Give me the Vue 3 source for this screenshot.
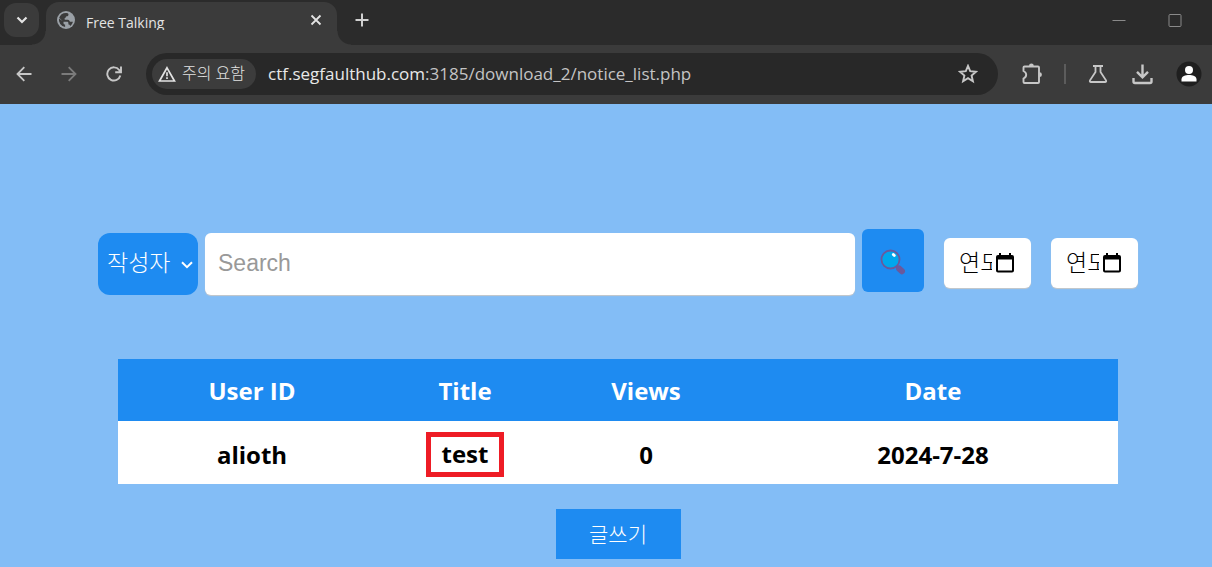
<script setup>
import { ref } from 'vue'

const field = ref('author')
const keyword = ref('')
const dates = ref([
  { id: 'start', label: '시작일', value: '연도' },
  { id: 'end', label: '종료일', value: '연도' }
])
const columns = ['User ID', 'Title', 'Views', 'Date']
const posts = [{ user: 'alioth', title: 'test', views: 0, date: '2024-7-28' }]
</script>

<template>
  <div class="window">
    <header class="browser">
      <div class="tabstrip">
        <button class="tab-search" aria-label="Search tabs">
          <svg width="12" height="8" viewBox="0 0 12 8"><path d="M1.5 1.5 6 6l4.500-4.500" fill="none" stroke="#e3e3e3" stroke-width="2.200" /></svg>
        </button>
        <div class="tab">
          <svg class="globe" width="18" height="18" viewBox="0 0 18 18">
            <circle cx="9" cy="9" r="9" fill="#9aa0a6" />
            <path d="M2 7.500l4.500 3.200v1.200c0 1 .8 1.600 1.600 1.600V16A7.200 7.200 0 0 1 2 7.500zM9.600 2c2 .3 2 1.300 1.800 2.200-.3 1-1.500 1-2.200 1.300-.8.300-.4 1.600-1.300 1.800-.8.200-.5 1.500.3 1.500h2.600c1.500 0 1.500 1.600 2.400 1.900h2.700c-.3 1.700-1.600 3.300-2.800 4.200-.3-.9-.8-1.300-1.700-1.300v-1.600c0-.8-.6-1.300-1.300-1.300H6.300L2.200 6.800C3 3.800 6 1.700 9.600 2z" fill="#3b3b3b" />
          </svg>
          <span class="tab-title">Free Talking</span>
          <button class="icon-btn" aria-label="Close tab">
            <svg width="12" height="12" viewBox="0 0 12 12"><path d="M1.500 1.500l9 9m0-9l-9 9" stroke="#e3e3e3" stroke-width="1.800" /></svg>
          </button>
        </div>
        <button class="icon-btn new-tab" aria-label="New tab">
          <svg width="14" height="14" viewBox="0 0 14 14"><path d="M7 .5v13M.5 7h13" stroke="#d0d0d0" stroke-width="2" /></svg>
        </button>
        <div class="win-controls">
          <button class="icon-btn" aria-label="Minimize">
            <svg width="14" height="14" viewBox="0 0 14 14"><path d="M.5 7.500h13" stroke="#8a8a8a" /></svg>
          </button>
          <button class="icon-btn" aria-label="Maximize">
            <svg width="14" height="14" viewBox="0 0 14 14"><rect x="1" y="1.500" width="12" height="12" rx="1" fill="none" stroke="#8a8a8a" /></svg>
          </button>
        </div>
      </div>

      <div class="toolbar">
        <nav class="nav">
          <button class="icon-btn" aria-label="Back">
            <svg width="16" height="16" viewBox="0 0 16 16"><path d="M15.500 8H1.700M8.300 1.200 1.500 8l6.800 6.800" fill="none" stroke="#c7c7c7" stroke-width="1.800" /></svg>
          </button>
          <button class="icon-btn" aria-label="Forward">
            <svg width="16" height="16" viewBox="0 0 16 16"><path d="M.5 8h13.800M7.700 1.200 14.500 8l-6.800 6.800" fill="none" stroke="#7b7b7b" stroke-width="1.800" /></svg>
          </button>
          <button class="icon-btn" aria-label="Reload">
            <svg width="16" height="16" viewBox="0 0 16 16"><path d="M14.300 9.500A6.600 6.600 0 1 1 13.200 4l1 1.600M15 .5v5.800H9.200" fill="none" stroke="#c7c7c7" stroke-width="1.900" /></svg>
          </button>
        </nav>
        <div class="omnibox">
          <button class="chip">
            <svg width="18" height="16" viewBox="0 0 18 16"><path d="M9 1.800 16.500 15h-15z" fill="none" stroke="#e3e3e3" stroke-width="1.700" /><path d="M9 6.200v4M9 11.300v1.800" stroke="#e3e3e3" stroke-width="1.700" /></svg>
            <span>주의 요함</span>
          </button>
          <span class="url">ctf.segfaulthub.com<span class="path">:3185/download_2/notice_list.php</span></span>
          <button class="icon-btn" aria-label="Bookmark">
            <svg width="20" height="20" viewBox="0 0 20 20"><path d="M10 1.900l2.200 5.300 5.800.5-4.400 3.800 1.300 5.700-4.900-3-4.900 3 1.300-5.700L2 7.700l5.800-.5z" fill="none" stroke="#c7c7c7" stroke-width="1.900" /></svg>
          </button>
        </div>
        <div class="actions">
          <button class="icon-btn" aria-label="Extensions">
            <svg width="22" height="22" viewBox="0 0 22 22"><path d="M2.500 4.500Q2.500 3.500 3.500 3.500H17Q18 3.500 18 4.500V19Q18 20 17 20H3.500Q2.500 20 2.500 19V15.500Q5.200 14.200 5.200 11.800T2.500 8z" fill="none" stroke="#c7c7c7" stroke-width="1.900" /><path d="M8 3a2.400 2.400 0 0 1 4.800 0zM18.500 9.300a2.400 2.400 0 0 1 0 4.800z" fill="#c7c7c7" /></svg>
          </button>
          <span class="divider"></span>
          <button class="icon-btn" aria-label="Experiments">
            <svg width="20" height="20" viewBox="0 0 20 20"><path d="M5 2h10M7.500 2v6L2 16.300Q1.300 18 3 18h14q1.700 0 1-1.700L12.500 8V2" fill="none" stroke="#c7c7c7" stroke-width="1.800" /></svg>
          </button>
          <button class="icon-btn" aria-label="Downloads">
            <svg width="22" height="22" viewBox="0 0 22 22"><path d="M11.500 1.500v12M6 8.800l5.500 5.500L17 8.800M2.500 15v3.500q0 1.500 1.500 1.500h15q1.500 0 1.500-1.500V15" fill="none" stroke="#c7c7c7" stroke-width="2.400" /></svg>
          </button>
          <button class="icon-btn" aria-label="Profile">
            <svg width="26" height="26" viewBox="0 0 26 26"><circle cx="13" cy="13" r="12.500" fill="#1f1f1f" /><circle cx="13" cy="9" r="4" fill="#fff" /><path d="M5.500 20.500v-2.300c0-3 4-4.200 7.500-4.200s7.500 1.200 7.500 4.200v2.300z" fill="#fff" /></svg>
          </button>
        </div>
      </div>
    </header>

    <main class="page">
      <form class="search" @submit.prevent>
        <div class="select-wrap">
          <select v-model="field" aria-label="검색 조건">
            <option value="author">작성자</option>
            <option value="title">제목</option>
          </select>
          <svg class="caret" width="12" height="8" viewBox="0 0 12 8"><path d="M1 1.200l5 5 5-5" fill="none" stroke="#fff" stroke-width="2" /></svg>
        </div>
        <input v-model="keyword" class="keyword" type="text" placeholder="Search" aria-label="Search" />
        <button class="submit" aria-label="검색">
          <svg width="26" height="26" viewBox="0 0 26 26">
            <path d="M16.500 17l4 4" stroke="#6a599c" stroke-width="2.500" />
            <path d="M19 19.500l3 2.800" stroke="#6a599c" stroke-width="6" stroke-linecap="round" />
            <circle cx="10.500" cy="10.500" r="9" fill="#00a6ed" stroke="#6a599c" stroke-width="1.800" />
            <path d="M13.300 5.500l1 1" stroke="#fff" stroke-width="2.800" stroke-linecap="round" />
          </svg>
        </button>
        <div v-for="d in dates" :key="d.id" class="date">
          <input v-model="d.value" type="text" :aria-label="d.label" />
          <button type="button" class="icon-btn" :aria-label="d.label + ' 선택'">
            <svg width="18" height="20" viewBox="0 0 18 20"><path d="M3 0h2v2h8V0h2v2h1q2 0 2 2v13.500q0 2-2 2H2q-2 0-2-2V4q0-2 2-2h1zM2 6.500v11h14v-11z" fill="#000" fill-rule="evenodd" /></svg>
          </button>
        </div>
      </form>

      <table>
        <thead>
          <tr><th v-for="c in columns" :key="c" scope="col">{{ c }}</th></tr>
        </thead>
        <tbody>
          <tr v-for="p in posts" :key="p.title">
            <td>{{ p.user }}</td>
            <td><span class="marked">{{ p.title }}</span></td>
            <td>{{ p.views }}</td>
            <td>{{ p.date }}</td>
          </tr>
        </tbody>
      </table>

      <button class="write">글쓰기</button>
    </main>
  </div>
</template>

<style>
body {
  background: #83bdf6;
}
</style>

<style scoped>
* {
  box-sizing: border-box;
}
.window {
  font-family: "Open Sans", "Noto Sans CJK KR", sans-serif;
  background: #83bdf6;
  min-height: 100vh;
}
button,
input,
select {
  font: inherit;
  border: 0;
  margin: 0;
}
svg {
  display: block;
  flex: none;
}
.icon-btn {
  background: none;
  padding: 0;
  flex: none;
}
.browser {
  background: #3b3b3b;
}
.tabstrip {
  display: flex;
  height: 45px;
  background: #2b2b2b;
  padding: 2px 30px 0 4px;
}
.tab-search {
  display: grid;
  place-items: center;
  width: 35px;
  height: 34px;
  margin: 1px 7px 0 0;
  border-radius: 12px;
  background: #3b3b3b;
  padding: 0;
}
.tab {
  position: relative;
  display: flex;
  align-items: flex-start;
  width: 291px;
  padding: 9px 15px 0 11px;
  border-radius: 13px 13px 0 0;
  background: #3b3b3b;
}
.tab::before,
.tab::after {
  content: "";
  position: absolute;
  bottom: 0;
  width: 14px;
  height: 14px;
}
.tab::before {
  right: 100%;
  background: radial-gradient(circle at 0 0, transparent 13px, #3b3b3b 14px);
}
.tab::after {
  left: 100%;
  background: radial-gradient(circle at 100% 0, transparent 13px, #3b3b3b 14px);
}
.tab .icon-btn {
  margin-top: 3px;
}
.tab-title {
  flex: 1;
  margin-left: 11px;
  height: 19px;
  line-height: 24px;
  overflow: hidden;
  font-size: 14px;
  color: #e3e3e3;
}
.new-tab {
  height: 36px;
  margin-left: 18px;
}
.win-controls {
  display: flex;
  gap: 42px;
  height: 36px;
  margin-left: auto;
}
.toolbar {
  display: flex;
  align-items: center;
  height: 59px;
  padding: 0 10px 2px 16px;
}
.nav {
  display: flex;
  gap: 29px;
  width: 130px;
}
.omnibox {
  flex: 1;
  display: flex;
  align-items: center;
  height: 42px;
  padding: 0 20px 0 6px;
  border-radius: 21px;
  background: #282828;
}
.chip {
  display: flex;
  align-items: center;
  gap: 6px;
  height: 30px;
  padding: 0 11px 0 6px;
  border-radius: 15px;
  background: #3c3c3c;
  color: #e3e3e3;
  font-size: 16px;
  font-weight: 300;
  line-height: 28px;
  white-space: nowrap;
}
.chip span {
  padding-bottom: 2px;
}
.url {
  flex: 1;
  margin-left: 12px;
  font-size: 17px;
  color: #e8e8e8;
  white-space: nowrap;
}
.path {
  color: #c4c4c4;
}
.actions {
  display: flex;
  align-items: center;
  margin-left: 23px;
}
.divider {
  width: 2px;
  height: 20px;
  margin: 0 22px 0 21px;
  background: #5c5c5c;
}
.actions .icon-btn + .icon-btn {
  margin-left: 23px;
}
.page {
  display: flex;
  flex-direction: column;
  align-items: center;
  padding: 125px 74px 8px 98px;
}
.search {
  display: flex;
  align-items: flex-end;
  width: 100%;
  height: 66px;
}
.select-wrap {
  position: relative;
  width: 100px;
  margin-right: 7px;
}
select {
  display: block;
  appearance: none;
  width: 100%;
  height: 62px;
  padding: 0 0 4px 9px;
  border-radius: 12px;
  background: #1e8bf1;
  color: #fff;
  font-size: 23px;
  font-weight: 300;
}
.caret {
  position: absolute;
  right: 5px;
  top: 28px;
  pointer-events: none;
}
.keyword {
  flex: 1;
  min-width: 0;
  height: 62px;
  padding: 0 13px 2px;
  border-radius: 6px;
  background: #fff;
  box-shadow: 0 1px 1px #c8c8c8;
  font-family: "Liberation Sans", sans-serif;
  font-size: 23px;
}
.keyword::placeholder {
  color: #999;
}
.submit {
  display: grid;
  place-items: center;
  width: 62px;
  height: 63px;
  margin: 0 0 3px 7px;
  padding: 3px 0 0;
  border-radius: 6px;
  background: #1e8bf1;
}
.date {
  display: flex;
  align-items: center;
  width: 87px;
  height: 50px;
  margin: 0 0 7px 20px;
  padding-left: 15px;
  border-radius: 6px;
  background: #fff;
  box-shadow: 0 1px 1px #c8c8c8;
}
.date input {
  width: 33px;
  margin-right: 4px;
  padding: 0 0 4px;
  background: none;
  font-family: "Noto Sans CJK KR", sans-serif;
  font-size: 23px;
  font-weight: 300;
}
table {
  width: calc(100% - 40px);
  margin-top: 64px;
  border-collapse: collapse;
  table-layout: fixed;
  font-size: 24px;
  font-weight: 700;
  text-align: center;
}
th,
td {
  padding: 0;
}
th {
  height: 62px;
  background: #1e8bf1;
  color: #fff;
}
th:nth-child(1) {
  width: 26.8%;
}
th:nth-child(2) {
  width: 15.8%;
}
th:nth-child(3) {
  width: 20.4%;
}
td {
  height: 63px;
  padding-top: 3px;
  background: #fff;
}
.marked {
  display: block;
  width: 78px;
  height: 45px;
  margin: 0 auto;
  border: 5px solid #ee1c25;
  line-height: 33px;
}
.write {
  width: 125px;
  height: 50px;
  margin-top: 25px;
  padding: 0 0 2px;
  background: #1e8bf1;
  color: #fff;
  font-size: 21px;
  font-weight: 300;
}
</style>
